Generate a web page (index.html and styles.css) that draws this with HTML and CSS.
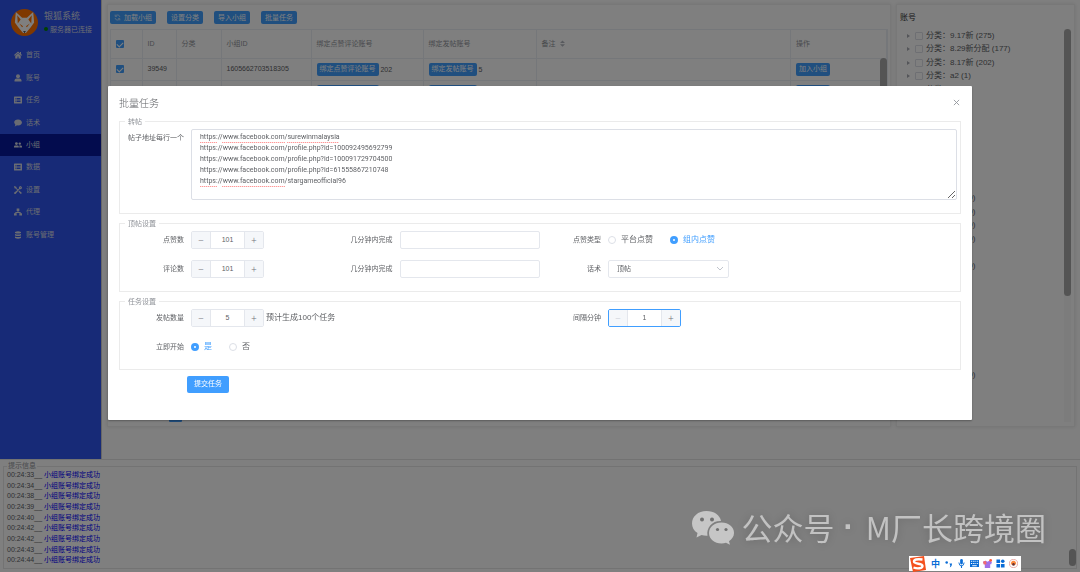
FILE: index.html
```html
<!DOCTYPE html>
<html lang="zh-CN">
<head>
<meta charset="utf-8">
<title>银狐系统</title>
<link rel="stylesheet" href="styles.css">
</head>
<body>
<div class="app">
  <div class="upper">
    <aside class="sidebar">
      <div class="brand">
        <svg class="logo" viewBox="0 0 28 28"><circle cx="14" cy="14" r="14" fill="#ff7000"/><path d="M5 3l6.500 6h5l6.500-6 1 11-3.500 5-5 6h-3l-5-6L4 14z" fill="#fff"/><path d="M6.500 6.500l3.500 4.500-3 4zM21.500 6.500L18 11l3 4zM8.500 15l4 3-1 1zM19.500 15l-4 3 1 1z" fill="#ff7000"/><path d="M12.500 23h3l-1.500 2z" fill="#222"/></svg>
        <div>
          <div class="brand-name">银狐系统</div>
          <div class="brand-status"><i class="dot"></i>服务器已连接</div>
        </div>
      </div>
      <nav class="menu">
        <a href="#"><svg viewBox="0 0 16 16"><path d="M8 1L0 8l1.500 1.500L8 4l6.500 5.500L16 8l-2-2V2h-2v2.300zM8 5L2.500 9.500V15H7v-4h2v4h4.500V9.500z"/></svg>首页</a>
        <a href="#"><svg viewBox="0 0 16 16"><circle cx="8" cy="4.500" r="4"/><path d="M1 15v-2q0-4 4-4h6q4 0 4 4v2z"/></svg>账号</a>
        <a href="#"><svg viewBox="0 0 16 16"><path fill-rule="evenodd" d="M1 1h14q1 0 1 1v12q0 1-1 1H1q-1 0-1-1V2q0-1 1-1zm2 3v2h2V4zm3 0v2h7V4zM3 7v2h2V7zm3 0v2h7V7zm-3 3v2h2v-2zm3 0v2h7v-2z"/></svg>任务</a>
        <a href="#"><svg viewBox="0 0 16 16"><path d="M8 1c10 0 11 12 0 12l-2-.3Q4 15 1 15q2-2 1.500-4C-2 7 1 1 8 1z"/></svg>话术</a>
        <a href="#" class="active"><svg viewBox="0 0 20 16"><circle cx="6" cy="4.500" r="3.500"/><circle cx="14.500" cy="4.500" r="3"/><path d="M0 14v-2q0-3 3-3h6q3 0 3 3v2zM13 14h7v-2q0-3-3-3h-4q1.500 2 0 5z"/></svg>小组</a>
        <a href="#"><svg viewBox="0 0 16 16"><path fill-rule="evenodd" d="M1 1h14q1 0 1 1v12q0 1-1 1H1q-1 0-1-1V2q0-1 1-1zm2 3v2h2V4zm3 0v2h7V4zM3 7v2h2V7zm3 0v2h7V7zm-3 3v2h2v-2zm3 0v2h7v-2z"/></svg>数据</a>
        <a href="#"><svg viewBox="0 0 16 16"><path d="M1 0l4 2v2l3 3 2-2c-1-3 2-6 5-5l-2.500 2.500 1 1L16 1c1 4-2 6-5 5.500L4 15q-2 2-3.500 0T2 12l4.500-3.500L3.500 5h-2L0 1zM10 9l5 4q1 2-1 3-1 0-5-5z"/></svg>设置</a>
        <a href="#"><svg viewBox="0 0 18 16"><path d="M6 0h6v6h-2v2h5v3h3v5h-6v-5h1v-1H5v1h1v5H0v-5h3V8h5V6H6z"/></svg>代理</a>
        <a href="#"><svg viewBox="0 0 16 16"><path d="M2 2q6-3 12 0v2q-6 2-12 0zM2 6q6 2 12 0v3q-6 2-12 0zM2 11q6 2 12 0v3q-6 3-12 0z"/></svg>账号管理</a>
      </nav>
    </aside>
    <main class="main">
      <section class="card groups">
        <div class="toolbar">
          <button class="btn"><svg viewBox="0 0 12 12" fill="none" stroke="currentColor"><path d="M2 7a4 4 0 0 0 7 2M10 5a4 4 0 0 0-7-2M2 1v3h3M10 11V8H7"/></svg>加载小组</button>
          <button class="btn">设置分类</button>
          <button class="btn">导入小组</button>
          <button class="btn">批量任务</button>
        </div>
        <div class="table-wrap">
          <table class="table">
            <colgroup><col class="c1"><col class="c2"><col class="c3"><col class="c4"><col class="c5"><col class="c6"><col><col class="c8"></colgroup>
            <thead>
              <tr><th><input type="checkbox" class="check" checked aria-label="全选"></th><th>ID</th><th>分类</th><th>小组ID</th><th>绑定点赞评论账号</th><th>绑定发帖账号</th><th>备注 <svg class="sort" viewBox="0 0 8 10"><path d="M4 0l4 4H0zM4 10L0 6h8z"/></svg></th><th>操作</th></tr>
            </thead>
            <tbody>
              <tr><td><input type="checkbox" class="check" checked aria-label="选择 39549"></td><td>39549</td><td></td><td>1605662703518305</td><td><button class="btn">绑定点赞评论账号</button> 202</td><td><button class="btn">绑定发帖账号</button> 5</td><td></td><td><button class="btn">加入小组</button></td></tr>
              <tr><td></td><td></td><td></td><td></td><td><button class="btn">绑定点赞评论账号</button></td><td><button class="btn">绑定发帖账号</button></td><td></td><td><button class="btn">加入小组</button></td></tr>
            </tbody>
          </table>
          <div class="bar table-bar"></div>
        </div>
        <div class="pager"><button class="page">1</button></div>
      </section>
      <section class="card accounts">
        <h2>账号</h2>
        <div class="tree-wrap">
          <div class="tree">
            <label><input type="checkbox">分类：9.17新 (275)</label>
            <label><input type="checkbox">分类：8.29新分配 (177)</label>
            <label><input type="checkbox">分类：8.17新 (202)</label>
            <label><input type="checkbox">分类：a2 (1)</label>
            <label><input type="checkbox">分类：</label>
            <label class="row13"><input type="checkbox">分类：a2 (10)</label>
            <label class="row14"><input type="checkbox">分类：a2 (10)</label>
            <label class="row15"><input type="checkbox">分类：a2 (10)</label>
            <label class="row16"><input type="checkbox">分类：a2 (10)</label>
            <label class="row18"><input type="checkbox">分类：a2 (10)</label>
            <label class="row26"><input type="checkbox">分类：a2 (10)</label>
          </div>
          <div class="track"><div class="bar tree-bar"></div></div>
        </div>
      </section>
    </main>
  </div>
  <footer class="lower">
    <fieldset class="log">
      <legend>提示信息</legend>
      <div class="lines">
        <div>00:24:33__ <b>小组账号绑定成功</b></div>
        <div>00:24:34__ <b>小组账号绑定成功</b></div>
        <div>00:24:38__ <b>小组账号绑定成功</b></div>
        <div>00:24:39__ <b>小组账号绑定成功</b></div>
        <div>00:24:40__ <b>小组账号绑定成功</b></div>
        <div>00:24:42__ <b>小组账号绑定成功</b></div>
        <div>00:24:42__ <b>小组账号绑定成功</b></div>
        <div>00:24:43__ <b>小组账号绑定成功</b></div>
        <div>00:24:44__ <b>小组账号绑定成功</b></div>
      </div>
      <div class="bar log-bar"></div>
    </fieldset>
  </footer>
</div>

<div class="mask">
  <form class="dialog" role="dialog" aria-labelledby="dlg-title">
    <header><h1 id="dlg-title">批量任务</h1><button type="button" class="close" aria-label="关闭"><svg viewBox="0 0 8 8"><path d="M1 1l6 6M7 1L1 7"/></svg></button></header>
    <fieldset class="group">
      <legend>转帖</legend>
      <div class="field tall">
        <label for="urls">帖子地址每行一个</label>
        <textarea id="urls" class="urls" spellcheck="false">https://www.facebook.com/surewinmalaysia
https://www.facebook.com/profile.php?id=100092495692799
https://www.facebook.com/profile.php?id=100091729704500
https://www.facebook.com/profile.php?id=61555867210748
https://www.facebook.com/stargameofficial96</textarea>
      </div>
    </fieldset>
    <fieldset class="group">
      <legend>顶帖设置</legend>
      <div class="grid">
        <div class="field"><label for="likes">点赞数</label><div class="number"><button type="button" aria-label="减少">−</button><input id="likes" value="101" inputmode="numeric"><button type="button" aria-label="增加">+</button></div></div>
        <div class="field"><label for="m1">几分钟内完成</label><input id="m1" class="text"></div>
        <div class="field wide"><span class="label">点赞类型</span><div class="radios"><label><input type="radio" name="kind">平台点赞</label><label><input type="radio" name="kind" checked>组内点赞</label></div></div>
        <div class="field"><label for="comments">评论数</label><div class="number"><button type="button" aria-label="减少">−</button><input id="comments" value="101" inputmode="numeric"><button type="button" aria-label="增加">+</button></div></div>
        <div class="field"><label for="m2">几分钟内完成</label><input id="m2" class="text"></div>
        <div class="field wide"><label for="script">话术</label><div class="select"><select id="script"><option>顶帖</option></select><svg viewBox="0 0 8 8"><path d="M1 2l3 3 3-3"/></svg></div></div>
      </div>
    </fieldset>
    <fieldset class="group">
      <legend>任务设置</legend>
      <div class="grid">
        <div class="field wide"><label for="posts">发帖数量</label><div class="number"><button type="button" aria-label="减少">−</button><input id="posts" value="5" inputmode="numeric"><button type="button" aria-label="增加">+</button></div><span class="hint">预计生成100个任务</span></div>
        <div class="field wide"><label for="gap">间隔分钟</label><div class="number focus"><button type="button" disabled aria-label="减少">−</button><input id="gap" value="1" inputmode="numeric"><button type="button" aria-label="增加">+</button></div></div>
        <div class="field wide"><span class="label">立即开始</span><div class="radios"><label><input type="radio" name="now" checked>是</label><label><input type="radio" name="now">否</label></div></div>
      </div>
    </fieldset>
    <button type="button" class="submit">提交任务</button>
  </form>
</div>

<div class="watermark">
  <svg viewBox="0 0 42 35"><path fill="#c6c6c6" d="M14.500 1C6 1 0 6.500 0 13.500c0 4 2 7.300 5.500 9.500L4.500 27.500l5-2.500q3 1 6 .8C14 17 21 10.500 29 11 28 5 22 1 14.500 1z"/><path fill="#c6c6c6" d="M29.500 12.500C22.500 12.500 17 17 17 23s5.500 10.500 12.500 10.500q2.500 0 4.500-.8l4 2-1-3.500c3-2 5-4.800 5-8.200 0-6-5.500-10.500-12.500-10.500z"/><g fill="#707070"><circle cx="10" cy="9.500" r="2"/><circle cx="20" cy="9.500" r="2"/><circle cx="25.500" cy="19.500" r="1.600"/><circle cx="34" cy="19.500" r="1.600"/></g></svg>
  <span>公众号</span><span class="wm-dot">·</span><span>M厂长跨境圈</span>
</div>
<div class="ime">
  <svg class="sogou" viewBox="0 0 18 18"><path d="M1 3L15 1l2 14-13 2z" fill="#f4511e"/><path d="M13.500 4.500Q5 3.500 5 6.500c0 3 8.500 1.500 8.500 4.500 0 2.500-5 3-9 1.500" fill="none" stroke="#fff" stroke-width="2.400"/></svg>
  <b>中</b>
  <svg viewBox="0 0 10 10"><circle cx="3" cy="4" r="1.400"/><path d="M6 5h3q0 3-2.500 4.500L7 7z"/></svg>
  <svg viewBox="0 0 10 10"><rect x="3.500" width="3" height="6" rx="1.500"/><path d="M1.500 4h1q.5 3 2.500 3t2.500-3h1Q8 7.500 5.600 8v2H4.400V8Q2 7.500 1.500 4z"/></svg>
  <svg viewBox="0 0 10 10"><path fill-rule="evenodd" d="M0 1h10v8H0zm1 1v1h1.500V2zm2.500 0v1H5V2zM6 2v1h1V2zm2 0v1h1V2zM1 4.500v1h1.500v-1zm2.500 0v1H5v-1zm2.500 0v1h1v-1zm2 0v1h1v-1zM2.500 7v1h5V7z"/></svg>
  <svg viewBox="0 0 10 10"><path d="M0 3l3-1 2 1 2-1 3 1-1 3-1-.5V10H2V5.500L1 6z" fill="#a070e8"/><path d="M0 3l3-1 1 3-2 2V5.500L1 6z" fill="#f06a70"/><circle cx="8.500" cy="1.500" r="1.500" fill="#ff5a36"/></svg>
  <svg viewBox="0 0 10 10"><path d="M.5.500h4v4h-4zM.5 5.500h4v4h-4zM5.500 5.500h4v4h-4z"/><circle cx="7.500" cy="2.500" r="2"/></svg>
  <svg viewBox="0 0 10 10"><circle cx="5" cy="5" r="4.500" fill="#fff" stroke="#e7a5a0"/><path d="M2 6q0-4 3-4t3 4z" fill="#ff8a3c"/><circle cx="5" cy="6" r="1.500" fill="#6b3030"/></svg>
</div>
</body>
</html>
```
FILE: styles.css
```css
* { box-sizing: border-box; }
body {
  margin: 0;
  background: #fff;
  color: #606266;
  font: 7px/10px "Liberation Sans", "Noto Sans CJK SC", sans-serif;
}
button, input, select, textarea { font: inherit; color: inherit; margin: 0; padding: 0; }
h1, h2 { margin: 0; font-weight: 400; }
fieldset { margin: 0; min-width: 0; }

.app { display: flex; flex-direction: column; height: 100vh; }
.upper { flex: 1; min-height: 0; display: flex; border-bottom: 1px solid #e4e4e4; }

/* Sidebar */
.sidebar { width: 101px; background: #2e54ee; color: #d4d8e6; }
.brand { display: flex; align-items: center; gap: 6px; height: 44px; padding-left: 11px; }
.logo { width: 27px; height: 27px; }
.brand-name { font-size: 9px; line-height: 14px; }
.brand-status { display: flex; align-items: center; gap: 2px; line-height: 13px; white-space: nowrap; }
.dot { width: 4px; height: 4px; border-radius: 50%; background: #008000; }
.menu { display: grid; grid-auto-rows: 1fr; height: 202px; }
.menu a { display: flex; align-items: center; gap: 4px; padding-left: 14px; color: inherit; text-decoration: none; }
.menu svg { width: 8px; height: 8px; fill: currentColor; }
.menu .active { background: #06189c; }

/* Main area */
.main { flex: 1; min-width: 0; display: flex; gap: 5px; padding: 4px 5px 32px; border-left: 1px solid #ccc; }
.card { background: #fff; border: 1px solid #f0f0f0; box-shadow: 0 0 4px #e4e4e4; overflow: hidden; }
.groups { flex: 1; min-width: 0; display: flex; flex-direction: column; padding: 6px 2px 4px; }
.toolbar { display: flex; gap: 11px; height: 18px; align-items: flex-start; }
.btn { display: inline-flex; align-items: center; gap: 3px; height: 13px; padding: 0 3px; border: 0; border-radius: 2px; background: #409eff; color: #fff; white-space: nowrap; }
.toolbar .btn { padding: 0 4px; }
.btn svg { width: 7px; height: 7px; }
.table-wrap { flex: 1; min-height: 0; position: relative; overflow: hidden; border: 1px solid #ebeef5; }
.table { width: 100%; table-layout: fixed; border-collapse: collapse; }
.table th, .table td { height: 22px; padding: 0 5px; border-right: 1px solid #ebeef5; border-bottom: 1px solid #ebeef5; text-align: left; white-space: nowrap; }
.table th { height: 28px; font-weight: 400; color: #909399; }
.c1 { width: 31px; } .c2 { width: 34px; } .c3 { width: 45px; } .c4 { width: 90px; }
.c5 { width: 112px; } .c6 { width: 113px; } .c8 { width: 96px; }
.check { appearance: none; display: block; width: 8px; height: 8px; border-radius: 1px; background: #409eff; }
.check::after { content: ""; display: block; width: 5px; height: 3px; margin: 2px 1px; border: solid #fff; border-width: 0 0 1px 1px; transform: rotate(-45deg); }
.sort { width: 5px; height: 7px; margin-left: 3px; fill: #b0b4bc; vertical-align: middle; }
.bar { width: 7px; border-radius: 4px; background: #a8a8a8; }
.table-bar { position: absolute; right: 0; top: 28px; height: 90px; }
.pager { padding: 4px 0 0 59px; }
.page { width: 13px; height: 14px; border: 0; border-radius: 1px; background: #409eff; color: #fff; }

.accounts { width: 179px; display: flex; flex-direction: column; padding: 4px 3px; }
.accounts h2 { font-size: 8px; line-height: 18px; font-weight: 400; height: 20px; color: #303133; }
.tree-wrap { flex: 1; min-height: 0; display: flex; justify-content: space-between; }
.tree { display: grid; grid-template-rows: repeat(29, 1fr); font-size: 8px; }
.tree label { display: flex; align-items: center; white-space: nowrap; }
.tree label::before { content: ""; margin: 0 5px 0 7px; border-left: 3px solid #a8abb2; border-top: 2px solid transparent; border-bottom: 2px solid transparent; }
.tree input { appearance: none; width: 8px; height: 8px; margin-right: 3px; border: 1px solid #dcdfe6; border-radius: 1px; }
.row13 { grid-row: 13; } .row14 { grid-row: 14; } .row15 { grid-row: 15; }
.row16 { grid-row: 16; } .row18 { grid-row: 18; } .row26 { grid-row: 26; }
.track { width: 7px; background: #f8f8f8; }
.tree-bar { height: 68%; }

/* Log */
.lower { height: 112px; padding: 2px 3px 3px; }
.log { position: relative; height: 100%; padding: 0 3px; border: 1px solid #e6e6e6; }
.log legend { height: 8px; line-height: 8px; padding: 0 1px; color: #909399; }
.lines { display: grid; grid-auto-rows: 1fr; height: 96px; }
.lines b { font-weight: 400; color: #00f; }
.log-bar { position: absolute; right: 0; bottom: 2px; height: 17px; }

/* Dialog */
.mask { position: fixed; inset: 0; background: rgba(0, 0, 0, .5); }
.dialog { width: 80%; margin: 15vh auto 0; padding: 0 11px 27px; background: #fff; border-radius: 1px; box-shadow: 0 1px 2px rgba(0, 0, 0, .3); }
.dialog header { display: flex; justify-content: space-between; align-items: center; height: 31px; padding-top: 5px; }
.dialog h1 { font-size: 10px; line-height: 14px; font-family: "Liberation Serif", "Noto Sans CJK SC", serif; font-weight: 300; }
.close { width: 10px; height: 14px; border: 0; background: none; }
.close svg { width: 7px; height: 7px; fill: none; stroke: #909399; }
.group { padding: 3px 3px 13px; border: 1px solid #ebebeb; margin-bottom: 5px; }
.group legend { margin-left: 2px; padding: 0 3px; line-height: 9px; height: 9px; color: #909399; }
.grid { display: grid; grid-template-columns: repeat(4, 1fr); gap: 11px 0; }
.field { display: flex; align-items: center; height: 18px; }
.wide { grid-column: span 2; }
.field > label, .label { flex: none; width: 68px; padding-right: 7px; text-align: right; white-space: nowrap; }
.tall { height: auto; align-items: flex-start; }
.tall > label { padding-top: 4px; }
.urls {
  flex: 1; display: block; height: 71px; padding: 2px 8px; border: 1px solid #dcdfe6; border-radius: 2px; font: 7px/11px Roboto, sans-serif; resize: vertical;
  --wave: repeating-linear-gradient(90deg, #f99 0 1px, #fdd 1px 2px);
  background: var(--wave) 8px 12px / 17px 1px, var(--wave) 30px 12px / 63px 1px, var(--wave) 95px 12px / 52px 1px, var(--wave) 8px 56px / 17px 1px, var(--wave) 30px 56px / 63px 1px, #fff;
  background-repeat: no-repeat;
}
.number { display: flex; width: 73px; height: 18px; border: 1px solid #e4e7ed; border-radius: 2px; overflow: hidden; }
.number button { width: 18px; border: 0; background: #f5f7fa; font: 300 10px/16px "Noto Sans CJK SC", sans-serif; color: #707379; }
.number input { flex: 1; min-width: 0; border: solid #e4e7ed; border-width: 0 1px; text-align: center; }
.number button:disabled { color: #c8ccd4; }
.number.focus { border-color: #409eff; }
.text { flex: 1; min-width: 0; height: 18px; padding: 0 8px; border: 1px solid #e4e7ed; border-radius: 2px; }
.hint { margin-left: 2px; font-size: 8px; }
.radios { display: flex; gap: 17px; font-size: 8px; }
.radios label { display: flex; align-items: center; gap: 5px; }
.radios input { appearance: none; width: 8px; height: 8px; border: 1px solid #dcdfe6; border-radius: 50%; }
.radios input:checked { border: 3px solid #409eff; }
.radios label:has(:checked) { color: #409eff; }
.select { position: relative; width: 121px; }
.select select { appearance: none; display: block; width: 100%; height: 18px; padding: 0 8px; border: 1px solid #e4e7ed; border-radius: 2px; background: #fff; }
.select svg { position: absolute; right: 5px; top: 5px; width: 8px; height: 8px; fill: none; stroke: #c0c4cc; }
.submit { display: block; height: 17px; margin: 6px 0 0 68px; padding: 0 7px; border: 0; border-radius: 2px; background: #409eff; color: #fff; }

/* Floating overlays */
.watermark { position: fixed; right: 34px; bottom: 25px; display: flex; align-items: center; color: #c2c2c2; font: 400 31px/40px "Noto Sans CJK SC", sans-serif; text-shadow: 0 0 8px rgba(0, 0, 0, .2); white-space: nowrap; }
.watermark svg { width: 42px; height: 35px; margin-right: 8px; }
.wm-dot { margin: 0 12px 0 9px; font-family: "Liberation Sans", sans-serif; font-weight: 700; }
.ime { position: fixed; right: 59px; bottom: 1px; display: flex; align-items: center; gap: 4px; height: 15px; padding-right: 3px; background: #fff; color: #0a6cd6; }
.ime svg { width: 9px; height: 9px; fill: currentColor; }
.ime b { font-size: 9px; }
.ime .sogou { width: 18px; height: 18px; }
```
